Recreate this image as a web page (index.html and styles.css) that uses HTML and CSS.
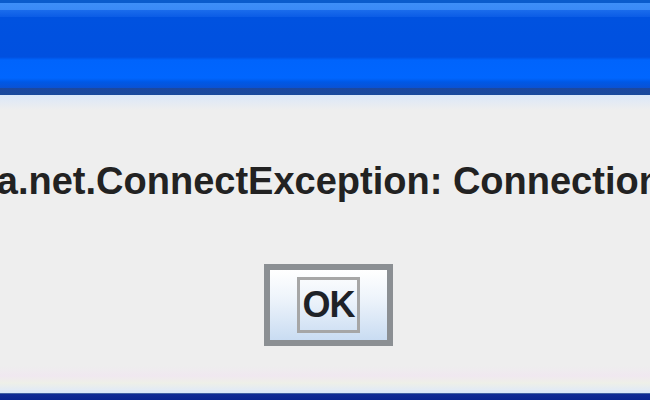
FILE: index.html
```html
<!DOCTYPE html>
<html lang="en">
<head>
    <meta charset="UTF-8">
    <meta name="viewport" content="width=device-width, initial-scale=1.0">
    <title>Message</title>
    <link rel="stylesheet" href="styles.css">
</head>
<body>

    <div class="dialog">
        <div class="titlebar"></div>
        <div class="content">
            <div class="message">java.net.ConnectException: Connection refused: connect</div>
            <div class="actions">
                <button class="button"><span class="focus">OK</span></button>
            </div>
        </div>
        <div class="frame-bottom"></div>
    </div>

</body>
</html>
```

FILE: styles.css
```css
body {
    margin: 0;
    width: 650px;
    height: 400px;
    overflow: hidden;
    font-family: "Liberation Sans", Arial, sans-serif;
    background-color: #eeeeee;
}
.dialog {
    display: flex;
    flex-direction: column;
    height: 400px;
}
.titlebar {
    height: 96px;
    flex: none;
    background: linear-gradient(to bottom,
        #0a5ccc 0px, #0a5ccc 3px,
        #3d8ff8 3px, #3a8af6 10px,
        #1a6cec 10px, #0b5ce6 17px,
        #0052e0 17px, #0050e0 57px,
        #0064fc 60px, #0066ff 78px,
        #0058e6 82px, #0a52d4 88px,
        #1c48a0 88px, #1a4a9c 95px,
        #d8e8fa 95px, #dce8f8 96px);
}
.content {
    flex: 1;
    display: flex;
    flex-direction: column;
    background: linear-gradient(to bottom, #dce8f8 0px, #eeeeee 14px, #eeeeee 270px, #f0e8f0 280px, #eef0e8 287px, #dde8fa 297px);
}
.message {
    margin-top: 62px;
    margin-left: -56px;
    white-space: nowrap;
    font-size: 38px;
    font-weight: bold;
    line-height: 46px;
    color: #222222;
}
.actions {
    display: flex;
    justify-content: center;
    padding-left: 7px;
    margin-top: 60px;
}
.button {
    width: 129px;
    height: 82px;
    padding: 0;
    border: 6px solid #8b8f93;
    border-radius: 0;
    background: linear-gradient(to bottom, #ffffff 0%, #eef4fb 40%, #c9dcf2 100%);
    display: flex;
    justify-content: center;
    align-items: center;
    font-family: "Liberation Sans", Arial, sans-serif;
}
.focus {
    display: block;
    width: 57px;
    height: 50px;
    border: 3px solid #a6a6a6;
    font-size: 36px;
    font-weight: bold;
    line-height: 50px;
    color: #1e2228;
    text-align: center;
    letter-spacing: -1px;
}
.frame-bottom {
    height: 7px;
    flex: none;
    background: linear-gradient(to bottom, #4462a4 0px, #4462a4 1px, #122c96 1px, #0c2690 7px);
}
```
